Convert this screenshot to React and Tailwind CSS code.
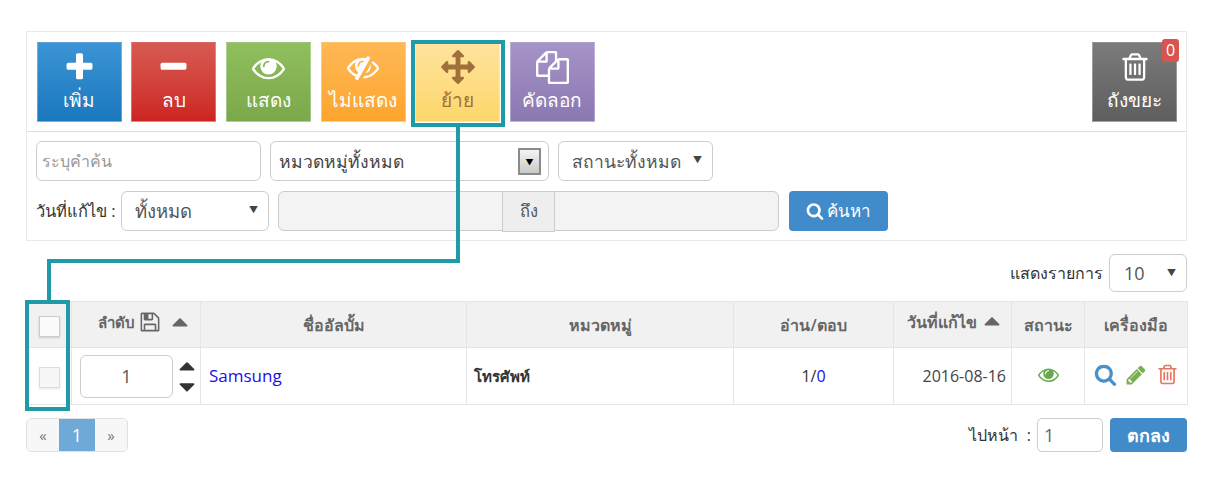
import React from "react";

const P = {
  plus: "M1600 736v192q0 40-28 68t-68 28h-416v416q0 40-28 68t-68 28h-192q-40 0-68-28t-28-68v-416h-416q-40 0-68-28t-28-68v-192q0-40 28-68t68-28h416v-416q0-40 28-68t68-28h192q40 0 68 28t28 68v416h416q40 0 68 28t28 68z",
  minus: "M1600 736v192q0 40-28 68t-68 28h-1216q-40 0-68-28t-28-68v-192q0-40 28-68t68-28h1216q40 0 68 28t28 68z",
  eye: "M1664 960q-152-236-381-353 61 104 61 225 0 185-131.5 316.5t-316.5 131.5-316.5-131.5-131.5-316.5q0-121 61-225-229 117-381 353 133 205 333.5 326.5t434.5 121.5 434.5-121.5 333.5-326.5zm-720-384q0-20-14-34t-34-14q-125 0-214.5 89.5t-89.5 214.5q0 20 14 34t34 14 34-14 14-34q0-86 61-147t147-61q20 0 34-14t14-34zm848 384q0 34-20 69-140 230-376.5 368.5t-499.5 138.5-499.5-139-376.5-368q-20-35-20-69t20-69q140-229 376.5-368t499.5-139 499.5 139 376.5 368q20 35 20 69z",
  eyeSlash: "M555 1335l78-141q-87-63-136-159t-49-203q0-121 61-225-229 117-381 353 167 258 427 375zm389-759q0-20-14-34t-34-14q-125 0-214.5 89.5t-89.5 214.5q0 20 14 34t34 14 34-14 14-34q0-86 61-147t147-61q20 0 34-14t14-34zm363-191q0 7-1 9-106 189-316 567t-315 566l-49 89q-10 16-28 16-12 0-134-70-16-10-16-28 0-12 44-87-143-65-263.5-173t-208.5-245q-20-31-20-69t20-69q153-235 380-371t496-136q89 0 180 17l54-97q10-16 28-16 5 0 18 6t31 15.5 33 18.5 31.5 18.5 19.5 11.5q16 10 16 27zm37 447q0 139-79 253.5t-209 164.5l280-502q8 45 8 84zm448 128q0 35-20 69-39 64-109 145-150 172-347.5 267t-419.5 95l74-132q212-18 392.5-137t301.5-307q-115-179-282-294l63-112q95 64 182.5 153t144.5 184q20 34 20 69z",
  arrows: "M1792 896q0 26-19 45l-256 256q-19 19-45 19t-45-19-19-45v-128h-384v384h128q26 0 45 19t19 45-19 45l-256 256q-19 19-45 19t-45-19l-256-256q-19-19-19-45t19-45 45-19h128v-384h-384v128q0 26-19 45t-45 19-45-19l-256-256q-19-19-19-45t19-45l256-256q19-19 45-19t45 19 19 45v128h384v-384h-128q-26 0-45-19t-19-45 19-45l256-256q19-19 45-19t45 19l256 256q19 19 19 45t-19 45-45 19h-128v384h384v-128q0-26 19-45t45-19 45 19l256 256q19 19 19 45z",
  files: "M1696 384q40 0 68 28t28 68v1216q0 40-28 68t-68 28h-960q-40 0-68-28t-28-68v-288h-544q-40 0-68-28t-28-68v-672q0-40 20-88t48-76l408-408q28-28 76-48t88-20h416q40 0 68 28t28 68v328q68-40 128-40h416zm-544 213l-299 299h299v-299zm-640-384l-299 299h299v-299zm196 647l316-316v-416h-384v416q0 40-28 68t-68 28h-416v640h512v-256q0-40 20-92t48-80zm956 804v-1152h-384v416q0 40-28 68t-68 28h-416v640h896z",
  trash: "M704 736v576q0 14-9 23t-23 9h-64q-14 0-23-9t-9-23v-576q0-14 9-23t23-9h64q14 0 23 9t9 23zm256 0v576q0 14-9 23t-23 9h-64q-14 0-23-9t-9-23v-576q0-14 9-23t23-9h64q14 0 23 9t9 23zm256 0v576q0 14-9 23t-23 9h-64q-14 0-23-9t-9-23v-576q0-14 9-23t23-9h64q14 0 23 9t9 23zm128 724v-948h-896v948q0 22 7 40.5t14.5 27 10.5 8.5h832q3 0 10.5-8.5t14.5-27 7-40.5zm-672-1076h448l-48-117q-7-9-17-11h-317q-10 2-17 11zm928 32v64q0 14-9 23t-23 9h-96v948q0 83-47 143.5t-113 60.5h-832q-66 0-113-58.5t-47-141.5v-952h-96q-14 0-23-9t-9-23v-64q0-14 9-23t23-9h309l70-167q15-37 54-63t79-26h320q40 0 79 26t54 63l70 167h309q14 0 23 9t9 23z",
  save: "M512 1536h768v-384h-768v384zm896 0h128v-896q0-14-10-38.5t-20-34.5l-281-281q-10-10-34-20t-39-10v416q0 40-28 68t-68 28h-576q-40 0-68-28t-28-68v-416h-128v1280h128v-416q0-40 28-68t68-28h832q40 0 68 28t28 68v416zm-384-928v-320q0-13-9.5-22.5t-22.5-9.5h-192q-13 0-22.5 9.5t-9.5 22.5v320q0 13 9.5 22.5t22.5 9.5h192q13 0 22.5-9.5t9.5-22.5zm640 32v928q0 40-28 68t-68 28h-1344q-40 0-68-28t-28-68v-1344q0-40 28-68t68-28h928q40 0 88 20t76 48l280 280q28 28 48 76t20 88z",
  pencil: "M491 1536l91-91-235-235-91 91v107h128v128h107zm523-928q0-22-22-22-10 0-17 7l-542 542q-7 7-7 17 0 22 22 22 10 0 17-7l542-542q7-7 7-17zm-54-192l416 416-832 832h-416v-416zm683 96q0 53-37 90l-166 166-416-416 166-165q36-38 90-38 53 0 91 38l235 234q37 39 37 91z",
  search: "M1216 832q0-185-131.5-316.5t-316.5-131.5-316.5 131.5-131.5 316.5 131.5 316.5 316.5 131.5 316.5-131.5 131.5-316.5zm512 832q0 52-38 90t-90 38q-54 0-90-38l-343-342q-179 124-399 124-143 0-273.5-55.5t-225-150-150-225-55.5-273.5 55.5-273.5 150-225 225-150 273.5-55.5 273.5 55.5 225 150 150 225 55.5 273.5q0 220-124 399l343 343q37 37 37 90z",
  up: "M1408 1216q0 26-19 45t-45 19h-896q-26 0-45-19t-19-45 19-45l448-448q19-19 45-19t45 19l448 448q19 19 19 45z",
  down: "M1408 704q0 26-19 45l-448 448q-19 19-45 19t-45-19l-448-448q-19-19-19-45t19-45 45-19h896q26 0 45 19t19 45z",
};

function Fa({ d, className = "" }) {
  return (
    <svg viewBox="0 0 1792 1792" fill="currentColor" className={`shrink-0 ${className}`}>
      <path d={d} />
    </svg>
  );
}

function Tool({ icon, label, cls, text = "text-white" }) {
  return (
    <div className={`w-[85px] h-[80px] flex flex-col items-center border border-white/30 ${cls} ${text}`}>
      <div className="h-[38px] mt-[5px] flex items-center justify-center">{icon}</div>
      <div className="text-[19px] leading-[24px] mt-[2px] whitespace-nowrap">{label}</div>
    </div>
  );
}

function Caret() {
  return <span className="absolute right-[10px] top-[11px] text-[9px] leading-[14px] text-[#444]">▼</span>;
}

function Select({ w, label, size = "text-[17.5px]" }) {
  return (
    <div className={`relative ${w} h-[40px] pl-[13px] shrink-0 border border-[#ccc] rounded-[6px] bg-white flex items-center ${size} text-[#555]`}>
      {label}
      <Caret />
    </div>
  );
}

const th = "border border-[#e3e6e8] bg-[#f1f1f1] text-[16px] font-semibold text-[#666] text-center p-0";
const td = "border border-[#e3e6e8] p-0";

export default function App() {
  return (
    <div className="relative w-[1213px] h-[487px] bg-white overflow-hidden pt-[31px] px-[26px] font-['Open_Sans','Noto_Sans','Noto_Sans_CJK_SC',sans-serif] text-[16px] text-[#333]">
      <div className="w-[1161px] h-[210px] border border-[#e8eaeb]">
        <div className="h-[100px] border-b border-[#e0e0e0] pt-[10px] pl-[9.9px] pr-[9px] flex gap-[9.55px]">
          <Tool icon={<Fa d={P.plus} className="w-[33px] h-[33px]" />} label="เพิ่ม" cls="bg-gradient-to-b from-[#3a94d6] to-[#1a78bc]" />
          <Tool icon={<Fa d={P.minus} className="w-[33px] h-[33px]" />} label="ลบ" cls="bg-gradient-to-b from-[#d65a52] to-[#cc2320]" />
          <Tool icon={<Fa d={P.eye} className="w-[33px] h-[33px]" />} label="แสดง" cls="bg-gradient-to-b from-[#90bf5e] to-[#7aa84a]" />
          <Tool icon={<Fa d={P.eyeSlash} className="w-[32px] h-[32px]" />} label="ไม่แสดง" cls="bg-gradient-to-b from-[#ffb854] to-[#fca52c]" />
          <Tool icon={<Fa d={P.arrows} className="w-[34px] h-[34px]" />} label="ย้าย" cls="bg-gradient-to-b from-[#ffe39c] to-[#fdd76a]" text="text-[#a0703a]" />
          <Tool icon={<Fa d={P.files} className="w-[33px] h-[33px]" />} label="คัดลอก" cls="bg-gradient-to-b from-[#a593c9] to-[#8b78b0]" />
          <div className="relative ml-auto">
            <Tool icon={<Fa d={P.trash} className="w-[32px] h-[32px]" />} label="ถังขยะ" cls="bg-gradient-to-b from-[#7b7b7b] to-[#5e5e5e]" />
            <span className="absolute right-[-2px] top-[-3px] w-[17px] h-[23px] rounded-[3px] bg-[#d9534f] text-white text-[16px] leading-[23px] text-center">0</span>
          </div>
        </div>
        <div className="px-[9px] pt-[9px]">
          <div className="flex h-[40px] gap-[9px]">
            <div className="w-[225px] h-[40px] border border-[#ccc] rounded-[6px] flex items-center pl-[5px] text-[16px] text-[#999]">ระบุคำค้น</div>
            <div className="relative w-[279px] h-[40px] border border-[#ccc] rounded-[6px] flex items-center pl-[8px] text-[17.5px] text-[#444]">
              หมวดหมู่ทั้งหมด
              <span className="absolute right-[7px] top-[6px] w-[23px] h-[27px] bg-gradient-to-b from-[#f4f4f4] to-[#c9c9c9] border-2 border-[#8a8a8a] flex items-center justify-center text-[8px] text-black">▼</span>
            </div>
            <Select w="w-[155px]" label="สถานะทั้งหมด" />
          </div>
          <div className="flex items-center h-[40px] mt-[10px]">
            <span className="text-[16.5px] w-[85px] shrink-0 whitespace-nowrap">วันที่แก้ไข :</span>
            <Select w="w-[148px]" label="ทั้งหมด" size="text-[18.5px]" />
            <div className="ml-[9px] w-[501px] h-[40px] flex border border-[#ccc] rounded-[6px] bg-[#f3f3f3]">
              <div className="w-[223px]" />
              <div className="w-[53px] h-[40px] border-x border-b border-[#ccc] bg-[#eeeeee] flex items-center justify-center text-[16.5px] text-[#555]">ถึง</div>
            </div>
            <div className="ml-[10px] w-[99px] h-[40px] rounded-[4px] bg-[#428bca] text-white flex items-center justify-center gap-[3px] text-[17px]">
              <Fa d={P.search} className="w-[18px] h-[18px]" />
              ค้นหา
            </div>
          </div>
        </div>
      </div>

      <div className="flex justify-end items-center gap-[6px] mt-[13px] h-[38px]">
        <span className="text-[16px]">แสดงรายการ</span>
        <div className="relative w-[78px] h-[38px] pl-[14px] border border-[#ccc] rounded-[6px] flex items-center text-[18px] text-[#555]">
          10
          <Caret />
        </div>
      </div>

      <table className="w-[1161px] mt-[9px] border-collapse table-fixed">
        <colgroup>
          <col className="w-[45px]" />
          <col className="w-[129px]" />
          <col className="w-[266px]" />
          <col className="w-[267px]" />
          <col className="w-[160px]" />
          <col className="w-[118px]" />
          <col className="w-[73px]" />
          <col className="w-[103px]" />
        </colgroup>
        <thead>
          <tr className="h-[46px]">
            <th className={th}>
              <span className="inline-block align-middle w-[21px] h-[21px] border border-[#ccc] bg-[#fafafa] shadow-[0_1px_2px_rgba(0,0,0,0.15)]" />
            </th>
            <th className={`${th} pb-[5px] pl-[18px]`}>
              <span className="inline-flex items-center gap-[4px] text-[15px]">
                ลำดับ <Fa d={P.save} className="w-[22px] h-[22px]" />
                <Fa d={P.up} className="w-[26px] h-[26px] ml-[2px] -mt-[3px]" />
              </span>
            </th>
            <th className={th}>ชื่ออัลบั้ม</th>
            <th className={th}>หมวดหมู่</th>
            <th className={th}>อ่าน/ตอบ</th>
            <th className={`${th} pb-[6px] pl-[6px]`}>
              <span className="inline-flex items-center gap-[2px]">
                วันที่แก้ไข <Fa d={P.up} className="w-[26px] h-[26px] -mt-[3px]" />
              </span>
            </th>
            <th className={th}>สถานะ</th>
            <th className={th}>เครื่องมือ</th>
          </tr>
        </thead>
        <tbody>
          <tr className="h-[57px]">
            <td className={`${td} text-center`}>
              <span className="inline-block align-middle w-[21px] h-[21px] border border-[#ddd] bg-[#f7f7f7] shadow-[0_1px_2px_rgba(0,0,0,0.1)]" />
            </td>
            <td className={td}>
              <div className="flex items-center pl-[8px]">
                <div className="w-[93px] h-[43px] border border-[#ccc] rounded-[6px] flex items-center justify-center text-[18px] text-[#555]">1</div>
                <div className="ml-[1px] flex flex-col text-[#333]">
                  <Fa d={P.up} className="w-[26px] h-[26px] -mb-[4px]" />
                  <Fa d={P.down} className="w-[26px] h-[26px]" />
                </div>
              </div>
            </td>
            <td className={`${td} pl-[8px] text-[#1a0dee] text-[17px]`}>Samsung</td>
            <td className={`${td} pl-[7px] text-[15px] font-semibold`}>โทรศัพท์</td>
            <td className={`${td} text-center text-[16px]`}>
              1/<span className="text-[#1a0dee]">0</span>
            </td>
            <td className={`${td} text-right pr-[5px] text-[16px] text-[#444]`}>2016-08-16</td>
            <td className={td}>
              <div className="flex justify-center text-[#6aa84f] -mt-[3px]">
                <Fa d={P.eye} className="w-[21px] h-[21px]" />
              </div>
            </td>
            <td className={td}>
              <div className="flex items-center justify-center gap-[8.5px] -mt-[3px]">
                <Fa d={P.search} className="w-[23px] h-[23px] text-[#4a90c8]" />
                <Fa d={P.pencil} className="w-[22px] h-[22px] text-[#78b050]" />
                <Fa d={P.trash} className="w-[23px] h-[23px] text-[#e8735f]" />
              </div>
            </td>
          </tr>
        </tbody>
      </table>

      <div className="flex items-center justify-between mt-[13px]">
        <div className="flex h-[34px] w-[102px] border border-[#e0e0e0] rounded-[5px] text-[#777] text-[15px] items-stretch overflow-hidden">
          <span className="w-[32px] flex items-center justify-center bg-[#f7f7f7]">«</span>
          <span className="w-[36px] flex items-center justify-center bg-[#6fa9d8] text-white text-[18px]">1</span>
          <span className="w-[32px] flex items-center justify-center bg-[#f7f7f7]">»</span>
        </div>
        <div className="flex items-center">
          <span className="text-[16px]">ไปหน้า&nbsp;&nbsp;:</span>
          <div className="ml-[6px] w-[66px] h-[34px] border border-[#ccc] rounded-[5px] flex items-center pl-[6px] text-[18px] text-[#666]">1</div>
          <div className="ml-[7px] w-[77px] h-[34px] rounded-[4px] bg-[#428bca] text-white text-[18px] font-semibold flex items-center justify-center">ตกลง</div>
        </div>
      </div>

      {/* annotation overlays */}
      <div className="absolute left-[411px] top-[40px] w-[94px] h-[87px] border-[4px] border-[#1f9aa8]" />
      <div className="absolute left-[456px] top-[127px] w-[4px] h-[136px] bg-[#1f9aa8]" />
      <div className="absolute left-[47px] top-[259px] w-[413px] h-[4px] bg-[#1f9aa8]" />
      <div className="absolute left-[47px] top-[259px] w-[4px] h-[42px] bg-[#1f9aa8]" />
      <div className="absolute left-[25px] top-[300px] w-[45px] h-[111px] border-[4px] border-[#1f9aa8]" />
    </div>
  );
}
